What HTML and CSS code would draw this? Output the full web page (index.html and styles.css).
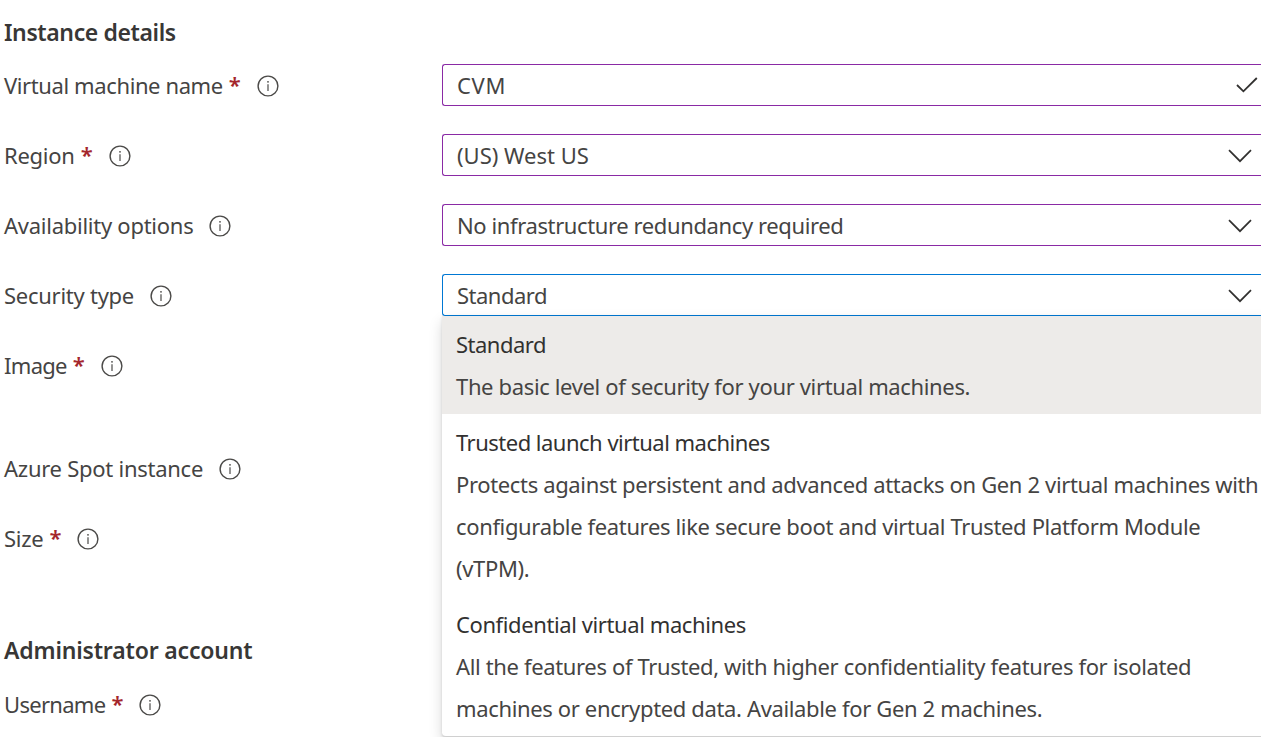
FILE: index.html
```html
<!DOCTYPE html>
<html lang="en">
<head>
<meta charset="utf-8">
<title>Create a virtual machine</title>
<link rel="stylesheet" href="styles.css">
</head>
<body>
<svg width="0" height="0" class="defs">
  <symbol id="info" viewBox="0 0 22 22"><circle cx="11" cy="11" r="9.9" fill="none" stroke="currentColor" stroke-width="1.4"/><path d="M11 9.2V16" stroke="currentColor" stroke-width="1.2"/><circle cx="11" cy="6.8" r=".9" fill="currentColor"/></symbol>
  <symbol id="chevron" viewBox="0 0 24 14"><path d="M1 1.2L12 12.2L23 1.2" fill="none" stroke="currentColor" stroke-width="1.7"/></symbol>
  <symbol id="check" viewBox="0 0 22 16"><path d="M1 8L7.4 14.3L20.8 1" fill="none" stroke="currentColor" stroke-width="1.8"/></symbol>
</svg>
<main class="form">
  <h2 class="heading snug">Instance details</h2>
  <div class="row">
    <label class="label"><span class="snug">Virtual machine name</span><b class="req">*</b><svg class="info"><use href="#info"/></svg></label>
    <div class="field"><span class="wide">CVM</span><svg class="check"><use href="#check"/></svg></div>
  </div>
  <div class="row">
    <label class="label"><span class="name">Region</span><b class="req">*</b><svg class="info"><use href="#info"/></svg></label>
    <div class="field"><span class="normal">(US) West US</span><svg class="chevron"><use href="#chevron"/></svg></div>
  </div>
  <div class="row">
    <label class="label"><span class="name">Availability options</span><svg class="info"><use href="#info"/></svg></label>
    <div class="field"><span class="snug">No infrastructure redundancy required</span><svg class="chevron"><use href="#chevron"/></svg></div>
  </div>
  <div class="row">
    <label class="label"><span class="name">Security type</span><svg class="info"><use href="#info"/></svg></label>
    <div class="select">
      <div class="field open"><span class="tight">Standard</span><svg class="chevron"><use href="#chevron"/></svg></div>
      <div class="menu">
        <div class="option selected"><p class="title">Standard</p><p>The basic level of security for your virtual machines.</p></div>
        <div class="option"><p class="title">Trusted launch virtual machines</p><p>Protects against persistent and advanced attacks on Gen 2 virtual machines with</p><p>configurable features like secure boot and virtual Trusted Platform Module</p><p>(vTPM).</p></div>
        <div class="option"><p class="title snug">Confidential virtual machines</p><p>All the features of Trusted, with higher confidentiality features for isolated</p><p>machines or encrypted data. Available for Gen 2 machines.</p></div>
      </div>
    </div>
  </div>
  <div class="row image">
    <label class="label"><span class="tighter">Image</span><b class="req">*</b><svg class="info"><use href="#info"/></svg></label>
  </div>
  <div class="row">
    <label class="label"><span class="name">Azure Spot instance</span><svg class="info"><use href="#info"/></svg></label>
  </div>
  <div class="row size">
    <label class="label"><span class="name">Size</span><b class="req">*</b><svg class="info"><use href="#info"/></svg></label>
  </div>
  <h2 class="heading admin">Administrator account</h2>
  <div class="row">
    <label class="label"><span class="tighter">Username</span><b class="req">*</b><svg class="info"><use href="#info"/></svg></label>
  </div>
</main>
</body>
</html>
```
FILE: styles.css
```css
* { box-sizing: border-box; }
body {
  margin: 0;
  height: 737px;
  overflow: hidden;
  background: #fff;
  color: #454443;
  font-family: "Segoe UI", "Noto Sans", sans-serif;
  font-size: 22px;
}
.defs { position: absolute; }
.form { width: 1261px; height: 737px; padding-top: 11px; overflow: hidden; }
.heading { margin: 0 0 11px 4px; font-size: 23px; line-height: 42px; font-weight: 600; color: #383736; }
.heading.admin { margin-bottom: 12px; letter-spacing: -.18px; }
.row { display: grid; grid-template-columns: 442px 1fr; height: 42px; margin-bottom: 28px; }
.row.image { margin-bottom: 61px; }
.row.size { margin-bottom: 70px; }
.label { display: flex; align-items: center; padding-left: 4px; white-space: nowrap; }
.name { letter-spacing: -.26px; }
.snug { letter-spacing: -.39px; }
.tight { letter-spacing: -.5px; }
.tighter { letter-spacing: -.7px; }
.wide { letter-spacing: .7px; }
.req { margin: 0 0 2px 6px; color: #a4262c; font-weight: 600; }
.info { width: 22px; height: 22px; margin: 2px 0 0 15.5px; color: #4b4a48; }
.req + .info { margin-left: 16px; }
.field {
  display: flex;
  align-items: center;
  justify-content: space-between;
  height: 42px;
  padding: 0 9px 0 14px;
  border: 1px solid #8a2aa5;
  border-right: 0;
  border-radius: 3px 0 0 3px;
  background: #fff;
  white-space: nowrap;
}
.field.open { border-color: #0078d4; }
.chevron { width: 24px; height: 14px; margin: 2px 0 0 0; color: #323130; }
.check { width: 22px; height: 16px; margin-right: -6px; color: #323130; }
.select { position: relative; min-width: 0; }
.menu {
  position: absolute;
  top: 42px;
  left: 0;
  width: 830px;
  height: 421px;
  background: #fff;
  border-bottom: 1px solid #d0d0d0;
  border-radius: 0 0 4px 4px;
  box-shadow: 0 6px 14px rgba(0, 0, 0, .15), 0 1px 3px rgba(0, 0, 0, .12);
}
.option { padding: 7px 14px; }
.option p { margin: 0; line-height: 42px; letter-spacing: -.355px; white-space: nowrap; }
.option .title { color: #323130; letter-spacing: -.51px; }
.option .title.snug { letter-spacing: -.4px; }
.selected { background: #edebe9; }
```
